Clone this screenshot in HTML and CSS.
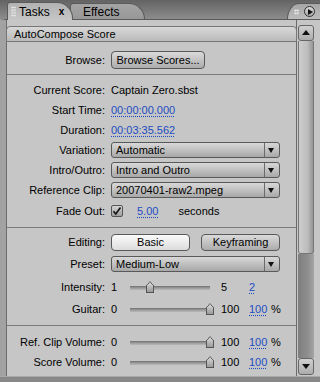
FILE: index.html
```html
<!DOCTYPE html>
<html lang="en">
  <head>
    <meta charset="utf-8">
    <title>AutoCompose Score</title>
    <link rel="stylesheet" href="styles.css">
  </head>
  <body>
    <div id="tabbar">
      <div class="tab active">
        <span class="grip"></span>
        <span class="tab-name">Tasks</span>
        <span class="tab-close">x</span>
      </div>
      <div class="tab">
        <span class="tab-name">Effects</span>
      </div>
      <div id="tab-menu">
        <span class="grip small"></span>
        <span id="menu-button"></span>
      </div>
    </div>

    <div id="frame">
      <div id="panel">
        <div id="panel-title">AutoCompose Score</div>

        <div class="group" id="browse-group">
          <div class="row">
            <span class="label">Browse:</span>
            <a class="button browse" href="#">Browse Scores...</a>
          </div>
        </div>

        <div class="group" id="score-group">
          <div class="row">
            <span class="label">Current Score:</span>
            <span>Captain Zero.sbst</span>
          </div>
          <div class="row">
            <span class="label">Start Time:</span>
            <a class="link" href="#">00:00:00.000</a>
          </div>
          <div class="row">
            <span class="label">Duration:</span>
            <a class="link" href="#">00:03:35.562</a>
          </div>
          <div class="row">
            <span class="label">Variation:</span>
            <div class="select"><span class="select-text">Automatic</span><span class="select-arrow"></span></div>
          </div>
          <div class="row">
            <span class="label">Intro/Outro:</span>
            <div class="select"><span class="select-text">Intro and Outro</span><span class="select-arrow"></span></div>
          </div>
          <div class="row">
            <span class="label">Reference Clip:</span>
            <div class="select"><span class="select-text">20070401-raw2.mpeg</span><span class="select-arrow"></span></div>
          </div>
          <div class="row fade-row">
            <span class="label">Fade Out:</span>
            <span class="checkbox">
              <svg width="10" height="10" viewBox="0 0 10 10"><path d="M1.5 5.2 L3.8 8 L8.5 1.5" fill="none" stroke="#111" stroke-width="1.6"/></svg>
            </span>
            <a class="link fade-value" href="#">5.00</a>
            <span class="unit">seconds</span>
          </div>
        </div>

        <div class="group" id="mix-group">
          <div class="row">
            <span class="label">Editing:</span>
            <a class="button mode selected" href="#">Basic</a>
            <a class="button mode keyframing" href="#">Keyframing</a>
          </div>
          <div class="row">
            <span class="label">Preset:</span>
            <div class="select"><span class="select-text">Medium-Low</span><span class="select-arrow"></span></div>
          </div>
          <div class="row intensity-row">
            <span class="label">Intensity:</span>
            <span class="min">1</span>
            <span class="slider"><span class="thumb" style="left: 25%"></span></span>
            <span class="max">5</span>
            <a class="link value" href="#">2</a>
          </div>
          <div class="row">
            <span class="label">Guitar:</span>
            <span class="min">0</span>
            <span class="slider"><span class="thumb" style="left: 100%"></span></span>
            <span class="max">100</span>
            <a class="link value" href="#">100</a>
            <span>%</span>
          </div>
        </div>

        <div class="group last" id="volume-group">
          <div class="row">
            <span class="label">Ref. Clip Volume:</span>
            <span class="min">0</span>
            <span class="slider"><span class="thumb" style="left: 100%"></span></span>
            <span class="max">100</span>
            <a class="link value" href="#">100</a>
            <span>%</span>
          </div>
          <div class="row">
            <span class="label">Score Volume:</span>
            <span class="min">0</span>
            <span class="slider"><span class="thumb" style="left: 100%"></span></span>
            <span class="max">100</span>
            <a class="link value" href="#">100</a>
            <span>%</span>
          </div>
        </div>
      </div>

      <div id="scrollbar">
        <div class="scroll-btn up"></div>
        <div class="scroll-thumb"></div>
        <div class="scroll-track"></div>
        <div class="scroll-btn down"></div>
      </div>
    </div>
    <div id="footer"></div>
  </body>
</html>
```

FILE: styles.css
```css
* {
  box-sizing: border-box
}

body {
  margin: 0;
  width: 320px;
  height: 382px;
  overflow: hidden;
  font-family: 'Liberation Sans', Arial, sans-serif;
  font-size: 11px;
  color: #000;
  background: #8a8a8a;
}

a {
  color: #000;
  text-decoration: none
}

/* tab strip */

#tabbar {
  height: 19px;
  display: flex;
  align-items: flex-end;
  padding-left: 7px;
  background: linear-gradient(#636363, #8c8c8c);
}

.tab {
  position: relative;
  display: flex;
  align-items: center;
  height: 16px;
  width: 75px;
  margin-left: -3px;
  padding-left: 12px;
  border: 1px solid #5a5a5a;
  border-bottom: 0;
  border-radius: 3px 16px 0 0 / 3px 16px 0 0;
  background: linear-gradient(#a4a4a4, #989898);
  font-size: 12px;
}

.tab.active {
  z-index: 2;
  height: 18px;
  width: 66px;
  margin-left: 0;
  margin-bottom: -1px;
  padding-left: 3px;
  background: linear-gradient(#b2b2b2, #c6c6c6);
}

.grip {
  width: 5px;
  height: 11px;
  margin-right: 3px;
  background-image: radial-gradient(circle, #e4e4e4 45%, transparent 55%);
  background-size: 2.5px 2.75px;
}

.grip.small {
  width: 5px;
  height: 6px;
  margin-right: 5px;
  background-image: radial-gradient(circle, #ececec 45%, transparent 55%);
}

.tab-close {
  margin-left: 9px;
  font-weight: bold;
  font-size: 10px;
}

#tab-menu {
  margin-left: auto;
  display: flex;
  align-items: center;
  width: 33px;
  height: 16px;
  padding-left: 6px;
  border: 1px solid #5a5a5a;
  border-right: 0;
  border-bottom: 0;
  border-radius: 12px 0 0 0 / 16px 0 0 0;
  background: linear-gradient(#a6a6a6, #bcbcbc);
}

#menu-button {
  position: relative;
  width: 11px;
  height: 11px;
  border: 1px solid #333;
  border-radius: 50%;
  background: linear-gradient(#d8d8d8, #a8a8a8);
}

#menu-button::after {
  content: "";
  position: absolute;
  left: 3px;
  top: 1.5px;
  border-left: 5px solid #111;
  border-top: 3.5px solid transparent;
  border-bottom: 3.5px solid transparent;
}

/* panel frame */

#frame {
  display: flex;
  height: 357px;
  border-top: 1px solid #5a5a5a;
  border-left: 6px solid #a2a2a2;
  background: #c6c6c6;
}

#panel {
  width: 291px;
  flex: none;
  padding-top: 6px;
  border-left: 1px solid #6c6c6c;
  border-right: 1px solid #6c6c6c;
}

#panel-title {
  height: 16px;
  line-height: 15px;
  margin: 0 -1px;
  padding-left: 7px;
  border: 1px solid #777;
  border-radius: 4px 4px 0 0;
  background: linear-gradient(#d8d8d8, #bababa);
}

.group {
  border-bottom: 1px solid #7c7c7c;
}

#browse-group {
  padding: 8px 0 4px;
}

#score-group {
  padding: 5px 0 6px;
}

#mix-group {
  display: flex;
  flex-direction: column;
  gap: 2px;
  padding: 4px 0 6px;
}

#volume-group {
  padding-top: 6px;
  border-bottom: 0;
}

.row {
  display: flex;
  align-items: center;
  height: 20px;
  white-space: nowrap;
}

.fade-row,
.intensity-row {
  margin-top: 1px;
}

.label {
  flex: none;
  width: 104px;
  padding-right: 6px;
  text-align: right;
}

.link {
  color: #1d4cc4;
  text-decoration: underline dotted;
  text-underline-offset: 2px;
}

/* controls */

.button {
  display: flex;
  align-items: center;
  justify-content: center;
  height: 18px;
  border: 1px solid #595959;
  border-radius: 4px;
  background: linear-gradient(#dadada, #acacac);
}

.button.browse {
  width: 94px;
}

.button.mode {
  width: 79px;
  height: 17px;
}

.button.selected {
  background: linear-gradient(#fbfbfb, #dcdcdc);
}

.button.keyframing {
  margin-left: 11px;
}

.select {
  display: flex;
  width: 169px;
  height: 16px;
  border: 1px solid #595959;
  border-radius: 3px;
  background: linear-gradient(#d8d8d8, #a8a8a8);
}

.select-text {
  flex: 1;
  padding-left: 4px;
  line-height: 14px;
}

.select-arrow {
  position: relative;
  width: 15px;
  border-left: 1px solid #6a6a6a;
}

.select-arrow::after {
  content: "";
  position: absolute;
  left: 3px;
  top: 5px;
  border-top: 5px solid #111;
  border-left: 3.5px solid transparent;
  border-right: 3.5px solid transparent;
}

.checkbox {
  display: flex;
  align-items: center;
  justify-content: center;
  width: 12px;
  height: 12px;
  border: 1px solid #555;
  border-radius: 2px;
  background: linear-gradient(#d4d4d4, #9e9e9e);
}

.fade-value {
  margin-left: 14px;
}

.unit {
  margin-left: 20px;
}

.min {
  width: 19px;
  flex: none;
}

.slider {
  position: relative;
  flex: none;
  width: 80px;
  height: 12px;
}

.slider::before {
  content: "";
  position: absolute;
  left: 0;
  right: 0;
  top: 5px;
  height: 4px;
  background: linear-gradient(#6e6e6e, #9c9c9c 50%, #b8b8b8);
}

.thumb {
  position: absolute;
  top: 0;
  width: 8px;
  height: 12px;
  margin-left: -4px;
  background: linear-gradient(#e2e2e2, #9a9a9a);
  border: 1px solid #555;
  border-top: 0;
  clip-path: polygon(0 40%, 50% 0, 100% 40%, 100% 100%, 0 100%);
}

.thumb::before {
  content: "";
  position: absolute;
  left: -1px;
  top: 0;
  width: 8px;
  height: 5px;
  background: linear-gradient(to bottom right, transparent 45%, #555 46%, #555 58%, transparent 60%) left / 50% 100% no-repeat,
              linear-gradient(to bottom left, transparent 45%, #555 46%, #555 58%, transparent 60%) right / 50% 100% no-repeat;
}

.max {
  width: 28px;
  margin-left: 11px;
  flex: none;
}

.value {
  width: 22px;
  flex: none;
}

/* scrollbar */

#scrollbar {
  display: flex;
  flex-direction: column;
  width: 16px;
  margin: 5px 0 1px 1px;
  flex: none;
}

.scroll-btn {
  position: relative;
  height: 16px;
  border: 1px solid #666;
  border-radius: 3px;
  background: linear-gradient(#d0d0d0, #acacac);
}

.scroll-btn.down {
  height: 17px;
}

.scroll-btn.up::after,
.scroll-btn.down::after {
  content: "";
  position: absolute;
  left: 3px;
  border-left: 4px solid transparent;
  border-right: 4px solid transparent;
}

.scroll-btn.up::after {
  top: 4px;
  border-bottom: 5px solid #111;
}

.scroll-btn.down::after {
  top: 5px;
  border-top: 5px solid #111;
}

.scroll-thumb {
  height: 213px;
  border: 1px solid #777;
  border-top: 0;
  border-radius: 0 0 3px 3px;
  background: linear-gradient(to right, #cdcdcd, #bdbdbd 60%, #959595);
}

.scroll-track {
  flex: 1;
  background: linear-gradient(to right, #7e7e7e, #8e8e8e 60%, #a4a4a4);
}

#footer {
  height: 6px;
  border-top: 1px solid #a8a8a8;
  background: #888;
}
```
